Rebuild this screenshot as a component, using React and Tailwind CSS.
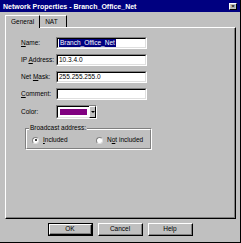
import React from "react";

const font = { fontFamily: '"Liberation Sans", Arial, sans-serif' };

const Field = ({ label, u, rest, value, selected }) => (
  <div className="flex items-center h-[12px] mb-[5px]">
    <span className="w-[35px] text-[6.5px] text-black">
      <span className="underline">{u}</span>
      {rest}
    </span>
    <div className="w-[91px] h-[12px] bg-white border-t border-l border-t-[#808080] border-l-[#808080] border-b border-r border-b-white border-r-white">
      <div className="h-full border-t border-l border-t-black border-l-black border-b border-r border-b-[#dfdfdf] border-r-[#dfdfdf] flex items-center pl-[1px] text-[6.5px] text-black">
        {selected ? (
          <span className="bg-[#000080] text-white leading-[8px] px-[1px]">{value}</span>
        ) : (
          <span className="leading-[8px]">{value}</span>
        )}
      </div>
    </div>
  </div>
);

const Radio = ({ checked }) => (
  <span className="w-[7px] h-[7px] rounded-full bg-white border border-t-[#808080] border-l-[#808080] border-b-[#dfdfdf] border-r-[#dfdfdf] flex items-center justify-center">
    {checked && <span className="w-[2px] h-[2px] rounded-full bg-black" />}
  </span>
);

const Button = ({ children, def }) => (
  <div className={`w-[45px] h-[13px] ${def ? "border border-black" : ""}`}>
    <div className="h-full border border-t-white border-l-white border-b-black border-r-black">
      <div className="h-full border-r border-b border-r-[#808080] border-b-[#808080] flex items-center justify-center text-[6.5px] text-black">
        {children}
      </div>
    </div>
  </div>
);

export default function App() {
  return (
    <div style={font} className="w-[241px] h-[243px] bg-[#c0c0c0] border-r border-b border-r-black border-b-black overflow-hidden">
      <div className="h-[12px] bg-[#000080] flex items-center justify-between pl-[3px] pr-[3px]">
        <span className="text-white font-bold text-[7px] leading-none">
          Network Properties - Branch_Office_Net
        </span>
        <span className="w-[8px] h-[7px] bg-[#c0c0c0] border border-t-white border-l-white border-b-black border-r-black flex items-center justify-center text-[6px] font-bold leading-none text-black">
          ×
        </span>
      </div>

      <div className="flex pl-[5px] mt-[2px] h-[13px] items-end">
        <div className="h-[13px] px-[5px] flex items-center bg-[#c0c0c0] border-t border-l border-t-white border-l-white border-r border-r-black text-[6.5px] text-black relative z-10 -mb-px">
          General
        </div>
        <div className="h-[12px] px-[5px] w-[27px] flex items-center border-t border-t-white border-r border-r-black text-[6.5px] text-black">
          NAT
        </div>
      </div>

      <div className="ml-[5px] w-[231px] h-[192px] border-t border-l border-t-white border-l-white border-b border-r border-b-black border-r-black">
        <div className="h-full border-r border-b border-r-[#808080] border-b-[#808080] pt-[9px] pl-[15px]">
          <Field u="N" rest="ame:" value="Branch_Office_Net" selected />
          <Field u="" rest={<>IP <span className="underline">A</span>ddress:</>} value="10.3.4.0" />
          <Field u="" rest={<>Net <span className="underline">M</span>ask:</>} value="255.255.255.0" />
          <Field u="C" rest="omment:" value="" />

          <div className="flex items-center h-[14px] mt-[1px]">
            <span className="w-[35px] text-[6.5px] text-black">Color:</span>
            <div className="w-[41px] h-[14px] bg-white border border-t-[#808080] border-l-[#808080] border-b-white border-r-white flex">
              <div className="flex-1 border border-t-black border-l-black border-b-[#dfdfdf] border-r-0 p-[1px] bg-white">
                <div className="h-full bg-[#800080] border border-white" />
              </div>
              <div className="w-[7px] bg-[#c0c0c0] border border-t-white border-l-white border-b-black border-r-black flex items-center justify-center">
                <span className="w-0 h-0 border-l-[2px] border-r-[2px] border-t-[2px] border-l-transparent border-r-transparent border-t-black" />
              </div>
            </div>
          </div>

          <div className="relative mt-[9px] ml-[4px] w-[127px] h-[22px] border border-t-[#808080] border-l-[#808080] border-b-white border-r-white">
            <div className="h-full border border-t-white border-l-white border-b-[#808080] border-r-[#808080]">
              <span className="absolute -top-[5px] left-[3px] bg-[#c0c0c0] px-[1px] text-[6.5px] leading-[8px] text-black">
                Broadcast address:
              </span>
              <div className="flex items-center h-full pt-[2px] pl-[5px] text-[6.5px] text-black">
                <div className="flex items-center gap-[4px] w-[64px]">
                  <Radio checked />
                  <span>
                    <span className="underline">I</span>ncluded
                  </span>
                </div>
                <div className="flex items-center gap-[4px]">
                  <Radio />
                  <span>
                    N<span className="underline">o</span>t included
                  </span>
                </div>
              </div>
            </div>
          </div>
        </div>
      </div>

      <div className="flex gap-[5px] pl-[48px] mt-[4px]">
        <Button def>OK</Button>
        <Button>Cancel</Button>
        <Button>Help</Button>
      </div>
    </div>
  );
}
